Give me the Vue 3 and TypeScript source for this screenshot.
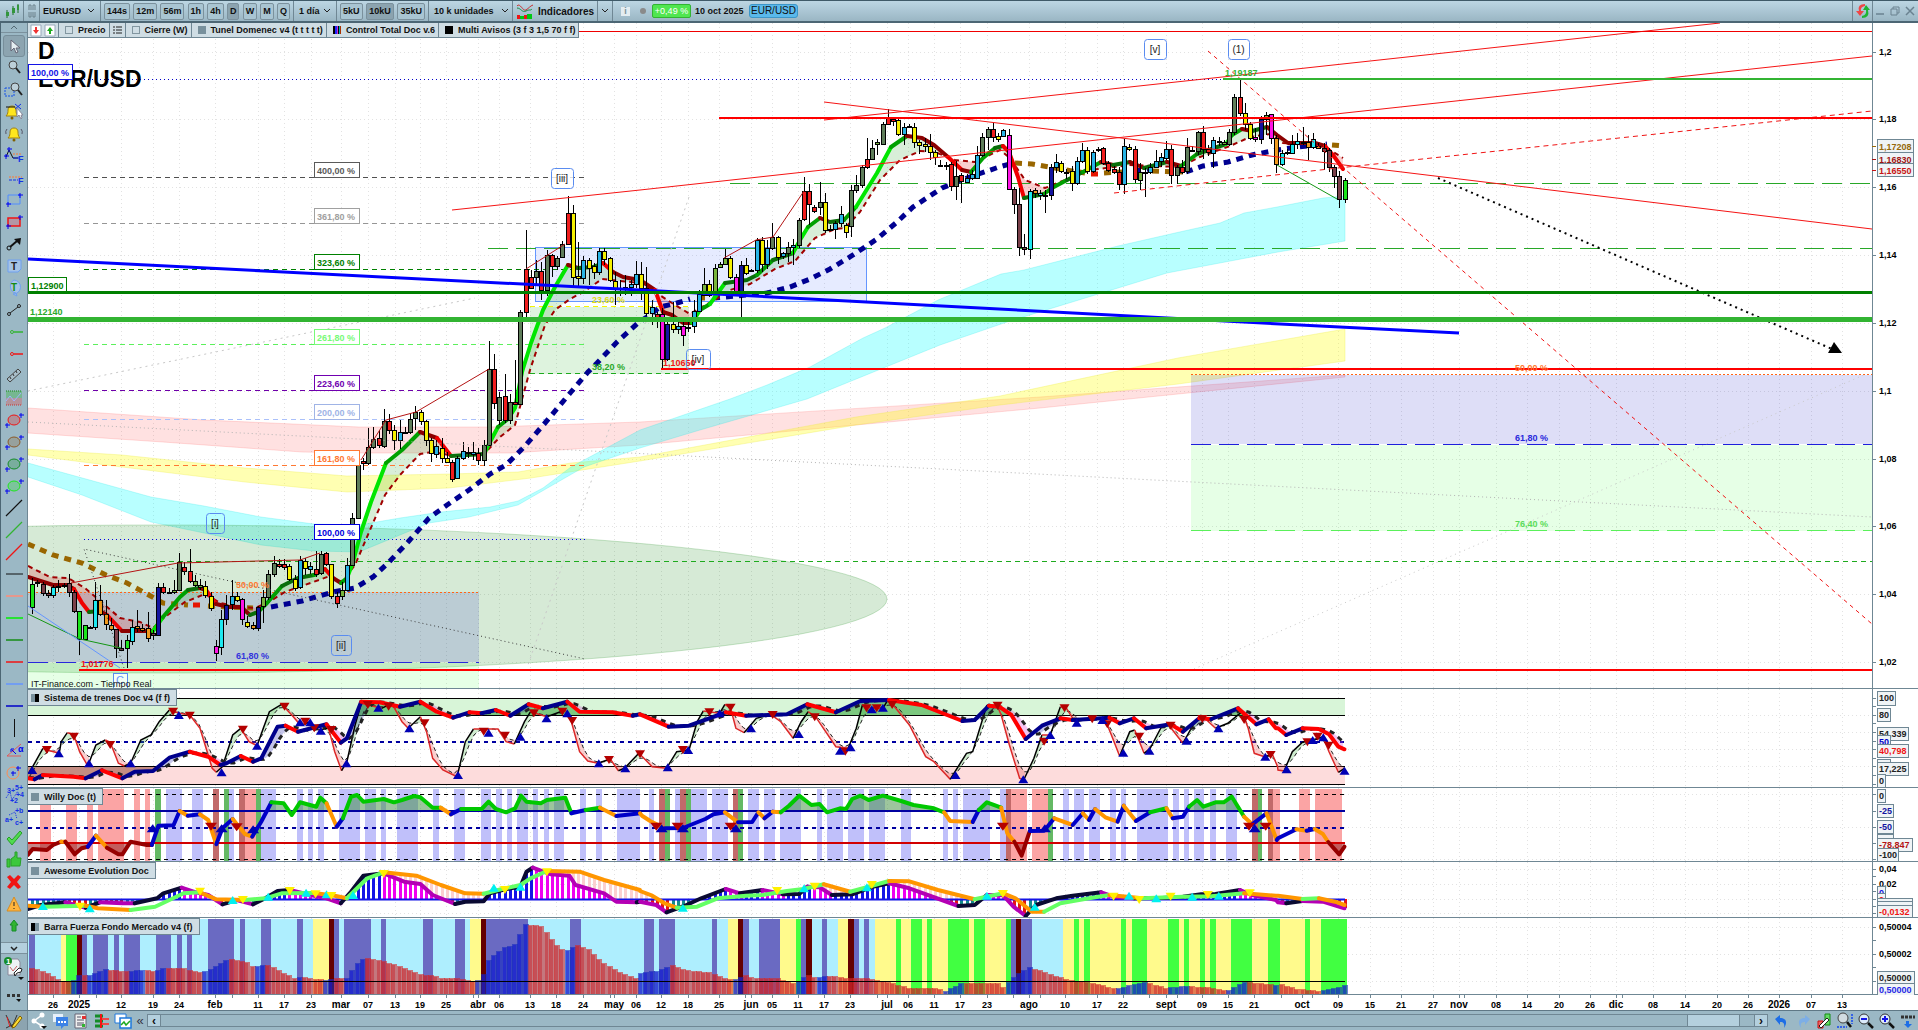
<script setup lang="ts">
type Pt = [number, number]
interface Run { d: string; c: string }
interface Tag { x: number; y: number; w: number; h: number; t: string; c: string; s?: string; b?: string }

const RIGHT = 1872
const FIRST_BAR = 32.2
const STEP = 5.25

const r1 = (n: number) => Math.round(n * 10) / 10
const xy = (s: string): Pt[] => s.trim().split(/\s+/).map(p => p.split(',').map(Number) as Pt)

// Indicator samples are stored on a finer pitch, in three blocks of 640 px.
const PITCH_X = 2.45
const PITCH_Y = 3
const BLOCKS = [0, 640, 1278]
const fine = (...blocks: string[]): Pt[] =>
  blocks.flatMap((b, i) => (b ? xy(b).map(([x, y]) => [r1(BLOCKS[i] + x / PITCH_X), r1(685 + y / PITCH_Y)] as Pt) : []))
const spans = (...blocks: string[]): Pt[] =>
  blocks.flatMap((b, i) => (b ? b.trim().split(/\s+/).map(p => {
    const [a, z] = p.split('-').map(Number)
    return [Math.round(BLOCKS[i] + a / PITCH_X), Math.round(BLOCKS[i] + z / PITCH_X)] as Pt
  }) : []))

const line = (p: Pt[]) => 'M' + p.map(q => q.join(',')).join('L')
function at(p: Pt[], x: number): number {
  for (let i = 1; i < p.length; i++) {
    if (x <= p[i][0]) {
      const [a, b] = [p[i - 1], p[i]]
      return b[0] === a[0] ? b[1] : a[1] + ((b[1] - a[1]) * (x - a[0])) / (b[0] - a[0])
    }
  }
  return p[p.length - 1][1]
}
function runs(p: Pt[], pick: (a: Pt, b: Pt) => string): Run[] {
  const out: Run[] = []
  for (let i = 1; i < p.length; i++) {
    const c = pick(p[i - 1], p[i])
    const last = out[out.length - 1]
    if (last && last.c === c) last.d += 'L' + p[i].join(',')
    else out.push({ c, d: line([p[i - 1], p[i]]) })
  }
  return out
}
function ribbon(a: Pt[], b: Pt[], over: string, under: string): Run[] {
  const out: Run[] = []
  let top: Pt[] = []
  let bot: Pt[] = []
  let sign = 0
  const flush = () => {
    if (top.length > 1) out.push({ c: sign < 0 ? over : under, d: line([...top, ...bot.reverse()]) + 'Z' })
    top = []
    bot = []
  }
  for (let x = 29; x <= 1344; x += 3) {
    const ya = r1(at(a, x))
    const yb = r1(at(b, x))
    const s = ya < yb ? -1 : 1
    if (s !== sign) { flush(); sign = s }
    top.push([x, ya])
    bot.push([x, yb])
  }
  flush()
  return out
}
const slope = (up: string, down: string) => (a: Pt, b: Pt) => (b[1] < a[1] ? up : down)
const lag = (p: Pt[], by: number): Pt[] => {
  const out: Pt[] = []
  for (let x = 29; x <= 1344; x += 5) out.push([x, r1((at(p, x - by) + at(p, x - by - 6) + at(p, x - by + 6)) / 3)])
  return out
}
const area = (p: Pt[], y: number) => line([[p[0][0], y], ...p, [p[p.length - 1][0], y]]) + 'Z'

/* ---------- candles ---------- */
const tones: Record<string, string> = {
  G: '#1be41b', B: '#7a404a', c: '#1ee8f0', o: '#f09a1e', n: '#1414a0', r: '#f01e1e', k: '#000', l: '#78b43c',
  g: '#5f7d5a', y: '#f5f000', m: '#ff14e6', b: '#28b4e6',
}
const tape = `G584,607,578,614 B582,583,580,587 B584,593,582,596 B593,595,590,598 c587,595,585,598 k586,587,580,592 k585,586,583,588
B583,592,574,597 B592,611,590,613 G611,639,611,655 G625,639,625,640 k627,628,626,629 c600,627,582,630 o600,614,585,616 o614,624,600,630
o625,629,618,631 B629,648,629,658 B648,650,640,651 G640,648,635,668 c627,641,620,645 o626,628,610,632 o628,630,624,632 o628,638,612,642
B633,635,630,640 n587,635,583,636 r587,592,583,594 k592,593,588,594 l590,592,580,594 g562,590,553,591 r567,571,562,575 r571,581,549,583
l581,585,575,587 l585,587,579,590 y586,595,581,598 y596,608,592,611 m646,653,640,661 c619,647,610,655 n605,619,595,625 b596,604,580,610
y596,600,592,602 m599,619,598,625 y622,626,616,628 o625,628,622,630 n607,628,606,631 l597,606,590,623 g574,597,570,600 g563,574,556,577
r564,566,559,568 r564,567,559,570 y566,579,564,581 y579,588,575,591 b560,587,556,589 y561,568,558,575 b566,569,562,574 r569,574,551,577
g554,573,551,575 r553,564,552,566 y564,596,564,599 r596,603,592,608 l590,596,582,600 b565,590,558,591 g518,565,513,566 g465,518,460,519
r461,463,458,470 g447,463,428,465 g439,447,427,449 r438,445,430,448 g421,446,409,448 r421,430,414,434 y430,440,425,450 b432,440,420,449
k432,433,427,434 g419,432,414,434 g412,418,406,430 y412,421,410,425 y421,440,420,446 y440,453,438,462 b446,454,440,458 y448,458,438,463
y458,462,452,463 r462,479,460,482 b458,478,456,479 b451,458,442,460 b452,453,447,458 b452,454,442,460 r453,460,448,465 g445,460,440,466
g369,445,341,446 r369,403,354,409 g397,420,392,425 r396,420,374,423 g402,420,394,424 r402,404,360,405 g312,404,310,404 r269,312,230,317
r277,288,270,289 g271,277,260,285 r271,290,262,300 g255,290,250,296 r255,266,254,277 g258,266,256,270 g244,257,241,258 r213,244,196,245
y213,277,205,286 y276,278,242,287 b260,278,256,284 y260,268,258,285 y266,272,263,279 b251,272,248,275 y251,259,248,265 y258,280,257,282
y281,289,272,305 k288,289,280,296 b287,289,275,295 b284,287,280,296 b274,284,261,288 y274,288,262,300 y288,313,267,316 b307,313,300,325
r314,317,312,328 m314,359,308,368 n324,359,322,361 y324,329,302,333 b326,329,322,334 m326,335,318,346 n327,328,322,332 b311,326,300,333
b294,311,290,312 l284,295,268,296 y284,295,280,297 l268,291,264,292 l264,267,262,268 l258,264,249,265 y258,277,256,279 m277,293,274,293
n265,294,261,317 y265,273,258,275 k270,271,269,272 b240,270,238,273 y240,264,237,272 b248,264,240,269 g237,248,223,250 y237,257,236,264
b253,256,252,259 g247,253,242,262 b245,247,239,265 g220,245,218,248 r191,219,177,221 r191,204,184,225 r207,211,205,213 g202,207,182,215
y202,230,193,233 k229,230,225,231 b223,229,221,239 b214,223,206,227 y225,232,223,238 g190,226,185,237 g185,190,175,193 g167,185,165,188
r159,167,138,169 g148,159,140,160 l142,144,139,155 g124,144,122,145 r117,124,109,125 r119,121,117,126 y120,134,117,136 b127,134,123,145
k126,127,124,128 y127,142,123,148 y142,145,140,154 y144,146,138,152 y146,152,134,160 y152,157,150,165 k165,166,160,166 k165,166,162,170
r164,186,162,191 g176,186,161,200 r175,181,173,203 b178,182,174,183 b174,178,170,180 b155,178,146,179 g137,155,133,157 g129,137,127,150
r129,137,123,142 y136,139,133,142 b130,136,129,137 m135,189,129,190 B189,204,187,214 B204,247,188,256 B247,249,234,255 c191,249,189,259
o190,193,188,198 c193,195,190,200 k195,196,190,213 n167,195,164,200 b162,167,154,173 y163,171,161,173 k172,173,169,179 y171,183,166,191
b161,183,157,185 b150,161,143,163 y150,171,147,174 b152,171,150,173 k149,150,147,152 r148,163,147,165 r163,170,161,172 r169,172,166,174
r172,184,167,190 b146,184,139,194 y147,149,144,151 r149,179,146,183 l172,180,163,190 k172,173,168,197 b167,172,163,174 b161,167,150,167
b157,161,153,167 b149,158,141,160 r149,175,145,184 g167,175,165,184 r167,172,160,174 g147,171,138,174 k150,151,146,151 g132,151,131,155
r132,149,126,159 r149,152,145,156 b140,153,137,168 k141,142,137,146 l142,144,140,145 g132,144,129,146 g97,132,94,135 r97,113,79,116
y113,124,103,130 y124,138,122,140 m137,139,128,142 n119,139,116,144 l115,119,112,135 m114,138,114,144 o138,164,135,173 c153,164,150,166
k152,153,149,155 c144,153,135,154 c141,144,133,149 k142,143,127,145 o142,147,135,160 c139,147,133,149 o146,148,143,149 B148,151,143,170
B150,167,148,172 B167,176,165,188 B176,199,171,208 G180,199,178,203`
const candles = tape.split(/\s+/).map((s, i) => {
  const [top, bot, high, low] = s.slice(1).split(',').map(Number)
  return { x: Math.round(FIRST_BAR + STEP * i), top, h: Math.max(1, bot - top), high, low, c: tones[s[0]] }
})

/* ---------- price pane averages ---------- */
const fast = xy(`28,577 53,585 67,585 74,589 82,603 89,612 100,611 107,615 122,631 153,631 163,617 180,597 188,590 200,588 206,590 216,604
229,607 241,607 250,615 258,612 267,603 282,586 298,578 314,575 325,569 333,578 341,583 347,578 353,562 361,532 371,502 386,463 402,450
420,432 437,438 451,456 467,455 484,454 490,442 498,427 508,419 515,408 522,372 531,343 543,310 555,287 568,265 578,268 593,267 603,263
613,272 623,277 640,280 655,290 663,312 672,315 683,323 692,323 700,310 710,304 725,283 747,280 757,275 773,260 793,253 800,240 808,227
820,218 830,222 844,220 856,207 877,173 891,147 907,136 922,138 934,145 948,157 962,170 971,172 983,158 995,148 1003,146 1009,152
1018,177 1024,198 1044,194 1052,188 1067,180 1083,172 1101,162 1113,165 1130,162 1144,168 1167,162 1181,166 1197,154 1226,144 1232,135
1242,129 1252,131 1267,127 1277,135 1288,143 1315,143 1325,146 1333,155 1343,169`)
const slow = xy(`28,566 50,577 68,578 85,588 100,601 120,618 140,622 153,628 165,617 185,602 205,594 220,603 240,607 255,608 267,603 285,592
330,576 342,582 355,565 370,530 385,495 400,475 420,454 432,452 455,456 484,454 500,437 515,425 530,370 545,325 555,310 570,299 585,291
602,279 640,283 655,292 675,305 690,314 700,308 715,300 730,290 750,284 775,269 795,261 815,238 835,229 845,228 860,212 880,180 900,160
920,151 935,152 955,160 975,162 1000,150 1010,158 1025,180 1045,188 1060,182 1090,170 1130,165 1180,167 1200,157 1230,146 1250,137
1270,134 1283,143 1315,144 1330,150 1343,158`)
const fastRuns = runs(fast, (a, b) => {
  const m = (b[1] - a[1]) / (b[0] - a[0])
  if (m < -1.2) return '#00e600'
  if (m < -0.5) return '#00a000'
  if (m < 0) return '#0a6e0a'
  return m < 0.9 ? '#8c0000' : '#f00000'
})
const fastFill = ribbon(fast, slow, 'rgba(60,170,60,.2)', 'rgba(230,60,60,.25)')
const longRuns = [
  { c: '#996600', p: '28,544 53,555 82,563 106,575 127,583 147,594 163,603 188,605' },
  { c: '#e61400', p: '193,605 204,605' },
  { c: '#996600', p: '208,606 253,608' },
  { c: '#000091', p: '271,607 302,601 333,592 355,588 373,577 388,563 408,542 429,518 447,505 469,490 490,474 506,465 524,447 545,423 571,392 588,372 597,363 617,342 638,323 650,315 660,307 677,303 690,299' },
  { c: '#996600', p: '698,298 708,298' },
  { c: '#000091', p: '713,298 737,296 767,293 790,287 810,279 830,269 853,255 877,239 897,222 913,207 942,188 967,178 999,167 1013,163' },
  { c: '#996600', p: '1015,163 1032,164 1060,169 1085,173' },
  { c: '#e61400', p: '1091,174 1100,174' },
  { c: '#996600', p: '1104,173 1122,172' },
  { c: '#000091', p: '1134,171 1150,169' },
  { c: '#996600', p: '1152,171 1183,172' },
  { c: '#000091', p: '1186,172 1203,166 1228,162 1252,155 1277,150 1298,147 1327,144' },
  { c: '#996600', p: '1332,145 1344,146' },
].map(s => ({ c: s.c, d: line(xy(s.p)) }))

const bands = [
  { c: 'rgba(255,90,90,.18)', s: 'rgba(255,90,90,.2)', p: '28,408 204,420 359,427 490,427 640,422 1040,397 1178,387 1345,375 1345,377 1178,394 1040,408 640,445 510,453 359,453 302,452 163,442 28,433' },
  { c: 'rgba(255,255,0,.3)', s: 'rgba(235,235,60,.3)', p: '28,449 122,455 245,468 347,476 449,474 518,472 571,463 640,457 856,417 1000,396 1178,358 1345,329 1345,361 1178,384 1000,405 856,425 640,461 531,478 449,488 347,492 245,482 122,467 28,455' },
  { c: 'rgba(0,255,255,.28)', s: 'rgba(0,225,225,.2)', p: '28,463 86,479 151,497 204,506 261,517 314,524 359,525 400,518 441,512 490,507 518,501 543,488 571,467 640,430 730,399 767,385 810,367 863,338 885,328 938,300 1001,274 1024,270 1118,246 1175,233 1220,223 1244,213 1277,207 1323,198 1345,196 1345,241 1278,252 1167,273 1007,322 940,345 807,399 700,430 640,448 584,467 518,505 469,517 429,523 400,535 359,552 314,551 261,545 204,533 151,522 82,495 28,477' },
].map(b => ({ ...b, d: line(xy(b.p)) + 'Z' }))

/* ---------- drawn levels ---------- */
interface Level { y: number; a: number; z: number; c: string; w: number; dash?: string }
const under: Level[] = [
  { y: 177, a: 84, z: 584, c: '#505050', w: 1, dash: '5 4' },
  { y: 223, a: 84, z: 584, c: '#969696', w: 1, dash: '5 4' },
  { y: 269, a: 84, z: 584, c: '#008000', w: 1, dash: '5 4' },
  { y: 344, a: 84, z: 584, c: '#5cf05c', w: 1, dash: '5 4' },
  { y: 390, a: 84, z: 584, c: '#6e00aa', w: 1, dash: '5 4' },
  { y: 419, a: 84, z: 584, c: '#aac0fa', w: 1, dash: '5 4' },
  { y: 465, a: 84, z: 584, c: '#ff7832', w: 1, dash: '5 4' },
  { y: 539, a: 84, z: 586, c: '#0000e6', w: 1, dash: '1 3' },
  { y: 561, a: 79, z: RIGHT, c: '#1eaa1e', w: 1, dash: '5 4' },
  { y: 592, a: 28, z: 479, c: '#ff6414', w: 1, dash: '2 2' },
  { y: 662, a: 28, z: 479, c: '#2828dc', w: 1, dash: '20 8' },
  { y: 306, a: 530, z: 689, c: '#f5f500', w: 1, dash: '5 4' },
  { y: 373, a: 530, z: 689, c: '#1eaa1e', w: 1, dash: '5 4' },
  { y: 374, a: 1191, z: RIGHT, c: '#ff6414', w: 1, dash: '2 2' },
  { y: 444, a: 1191, z: RIGHT, c: '#1e1edc', w: 1, dash: '20 8' },
  { y: 530, a: 1191, z: RIGHT, c: '#5af05a', w: 1, dash: '20 8' },
  { y: 79, a: 28, z: 1224, c: '#0000c8', w: 1, dash: '1 3' },
  { y: 183, a: 730, z: RIGHT, c: '#28a828', w: 1, dash: '20 8' },
  { y: 248, a: 488, z: RIGHT, c: '#28a828', w: 1, dash: '20 8' },
]
const over: Level[] = [
  { y: 31, a: 28, z: RIGHT, c: '#f00000', w: 1 },
  { y: 79, a: 1223, z: RIGHT, c: '#32b432', w: 2 },
  { y: 118, a: 719, z: RIGHT, c: '#ff0000', w: 2 },
  { y: 292, a: 28, z: RIGHT, c: '#008000', w: 3 },
  { y: 319, a: 28, z: RIGHT, c: '#32b432', w: 5 },
  { y: 369, a: 661, z: RIGHT, c: '#ff0000', w: 2 },
  { y: 670, a: 79, z: RIGHT, c: '#ff0000', w: 2 },
]
const strokes = [
  { p: '28,391 475,298', c: '#c8c8c8', w: 1, dash: '2 4' },
  { p: '689,197 528,665', c: '#c8c8c8', w: 1, dash: '2 4' },
  { p: '28,422 1872,517', c: '#b4b4b4', w: 1, dash: '1 3' },
  { p: '1194,669 1866,374', c: '#c8c8c8', w: 1, dash: '1 4' },
  { p: '124,668 84,549 585,659', c: '#3c3c3c', w: 1, dash: '1 3' },
  { p: '28,259 640,290 1280,324 1459,333', c: '#0000ff', w: 3, dash: '' },
  { p: '452,210 640,190 1280,120 1872,56', c: '#f51414', w: 1, dash: '' },
  { p: '824,120 1278,71 1720,23', c: '#f51414', w: 1, dash: '' },
  { p: '824,102 1278,157 1872,229', c: '#f51414', w: 1, dash: '' },
  { p: '1208,51 1872,624', c: '#f01414', w: 1, dash: '4 4' },
  { p: '1114,193 1338,168 1872,111', c: '#f01414', w: 1, dash: '5 4' },
  { p: '71,583 178,563 300,560 320,553', c: '#b41414', w: 1, dash: '' },
  { p: '361,460 386,420 416,412 489,369', c: '#b41414', w: 1, dash: '' },
  { p: '526,269 565,244', c: '#b41414', w: 1, dash: '' },
  { p: '724,258 756,240 773,237 804,191', c: '#b41414', w: 1, dash: '' },
  { p: '28,614 80,639 121,648', c: '#149614', w: 1, dash: '' },
  { p: '1277,165 1337,199', c: '#149614', w: 1, dash: '' },
  { p: '28,606 120,668', c: '#6496ff', w: 1, dash: '' },
  { p: '1438,178 1832,349', c: '#000', w: 2, dash: '2 4' },
].map(s => ({ ...s, d: line(xy(s.p)) }))

const fibs: Tag[] = [
  [162, '400,00 %', '#5a5a5a'], [208, '361,80 %', '#a0a0a0'], [254, '323,60 %', '#008000'], [329, '261,80 %', '#78fa78'],
  [375, '223,60 %', '#7000b0'], [404, '200,00 %', '#a0b4e6'], [450, '161,80 %', '#ff7832'], [524, '100,00 %', '#0000dc'],
].map(([y, t, c]) => ({ x: 314, y: y as number, w: 45, h: 15, t: t as string, c: c as string }))
const levelTags: Tag[] = [
  ...fibs,
  { x: 28, y: 64, w: 44, h: 15, t: '100,00 %', c: '#1414e6' },
  { x: 28, y: 277, w: 38, h: 14, t: '1,12900', c: '#008000' },
]
const notes = [
  { x: 30, y: 315, t: '1,12140', c: '#28a828' },
  { x: 236, y: 588, t: '50,00 %', c: '#ff7832' },
  { x: 236, y: 659, t: '61,80 %', c: '#3232dc' },
  { x: 81, y: 667, t: '1,01776', c: '#f01414' },
  { x: 1225, y: 76, t: '1,19187', c: '#32b432' },
  { x: 663, y: 366, t: '1,10650', c: '#f01414' },
  { x: 592, y: 303, t: '23,60 %', c: '#dcdc14' },
  { x: 592, y: 370, t: '38,20 %', c: '#28a828' },
  { x: 1515, y: 371, t: '50,00 %', c: '#ff7832' },
  { x: 1515, y: 441, t: '61,80 %', c: '#2828dc' },
  { x: 1515, y: 527, t: '76,40 %', c: '#5adc5a' },
]
const waves = [
  { x: 206, y: 513, w: 18, t: '[i]', o: 0 }, { x: 331, y: 635, w: 20, t: '[ii]', o: 0 }, { x: 551, y: 168, w: 22, t: '[iii]', o: 0.8 },
  { x: 686, y: 349, w: 24, t: '[iv]', o: 0 }, { x: 1144, y: 39, w: 22, t: '[v]', o: 0.8 }, { x: 1228, y: 39, w: 21, t: '(1)', o: 0.8 },
]

/* ---------- axes ---------- */
const priceTicks = [
  { y: 52, t: '1,2' }, { y: 119, t: '1,18' }, { y: 187, t: '1,16' }, { y: 255, t: '1,14' }, { y: 323, t: '1,12' },
  { y: 391, t: '1,1' }, { y: 459, t: '1,08' }, { y: 526, t: '1,06' }, { y: 594, t: '1,04' }, { y: 662, t: '1,02' },
]
const priceTags: Tag[] = [
  { x: 1877, y: 139, w: 37, h: 14, t: '1,17208', c: '#96690a' },
  { x: 1877, y: 152, w: 37, h: 12, t: '1,16830', c: '#a01414' },
  { x: 1877, y: 163, w: 37, h: 13, t: '1,16550', c: '#c81414' },
]
const dates: [number, string][] = [
  [53, '26'], [79, '2025'], [121, '12'], [153, '19'], [179, '24'], [215, 'feb'], [258, '11'], [284, '17'], [311, '23'], [341, 'mar'],
  [368, '07'], [395, '13'], [420, '19'], [446, '25'], [478, 'abr'], [499, '06'], [530, '13'], [556, '18'], [583, '24'], [614, 'may'],
  [636, '06'], [661, '12'], [688, '18'], [719, '25'], [751, 'jun'], [772, '05'], [798, '11'], [824, '17'], [850, '23'], [887, 'jul'],
  [908, '06'], [934, '11'], [960, '17'], [987, '23'], [1029, 'ago'], [1065, '10'], [1097, '17'], [1123, '22'], [1166, 'sept'],
  [1202, '09'], [1228, '15'], [1254, '21'], [1302, 'oct'], [1338, '09'], [1370, '15'], [1401, '21'], [1433, '27'], [1459, 'nov'],
  [1496, '08'], [1527, '14'], [1559, '20'], [1590, '26'], [1616, 'dic'], [1653, '08'], [1685, '14'], [1717, '20'], [1748, '26'],
  [1779, '2026'], [1811, '07'], [1842, '13'],
]
const minor = [96, 232, 473, 610, 745, 877, 1013, 1040, 1149, 1177, 1281, 1312, 1464, 1622]

/* ---------- Sistema de trenes ---------- */
const train = fine(
  `68,280 85,283 105,270 180,275 210,280 250,256 300,280 330,260 375,258 415,218 465,200 510,215 540,240 555,235 590,213 620,230 640,220
680,125 700,122 730,140 800,118 835,173 850,160 885,50 930,52 980,65 1030,50 1070,80 1110,98 1150,82 1180,85 1215,75 1250,92 1295,58
1330,70 1390,50 1420,80 1500,82 1550,92`,
  `0,88 70,125 120,122 210,82 260,92 360,88 410,58 480,82 540,48 610,45 690,60 790,108 820,105 855,62 880,65 910,90 945,162 985,122
1030,100 1060,105 1150,98 1175,115 1210,100 1240,130 1300,118 1330,140 1370,100 1400,102 1465,70 1510,118 1540,103 1558,130`,
  '0,130 20,150 60,130 100,132 125,148 148,185 163,193')
const trainLag = lag(train, 8)
const trainRuns = runs(train, slope('#00008c', '#ff0000'))
const trainFill = ribbon(train, trainLag, 'rgba(60,60,180,.3)', 'rgba(220,60,220,.3)')
const osc = fine(
  `70,265 80,245 105,190 115,195 145,205 150,170 165,143 180,148 195,200 215,243 235,180 258,165 270,172 290,235 305,243 320,235 345,165
370,150 390,110 415,75 440,85 465,90 490,130 505,190 520,250 530,262 545,245 570,150 590,130 610,170 630,182 645,130 660,80 690,58 715,90
730,112 745,118 760,110 780,135 805,130 820,200 837,257 850,230 870,120 885,55 935,70 960,55 985,110 1000,130 1030,95 1045,140 1060,220
1085,255 1120,275 1140,170 1160,132 1220,132 1240,170 1260,177 1285,110 1300,80 1340,95 1385,75 1400,110 1420,200 1440,228 1465,235
1495,222 1515,257 1530,250 1565,205`,
  `0,208 30,245 65,250 90,200 120,195 140,110 155,78 195,85 208,58 222,70 235,130 255,143 285,100 320,88 345,110 375,160 395,110 412,80
430,95 480,185 510,190 530,130 545,60 570,70 595,70 607,45 620,60 660,120 700,215 720,230 760,283 800,205 815,200 850,60 875,62 885,90
905,180 930,280 940,285 965,220 985,150 1005,150 1030,65 1045,70 1065,110 1110,100 1140,105 1155,150 1175,213 1200,140 1212,135 1235,205
1250,190 1280,120 1295,120 1330,175 1355,120 1375,90 1410,130 1440,115 1475,80 1490,130 1505,205 1530,215 1550,210 1562,245`,
  '0,255 15,258 35,200 60,172 85,165 110,155 125,200 148,262 163,250')
const oscRuns = runs(osc, slope('#000', '#dc2828'))
const oscLag = lag(osc, 3)
const oscFill = ribbon(osc, oscLag, 'rgba(60,180,60,.25)', 'rgba(230,60,60,.25)')
const oscDown = fine(
  '115,195 181,155 270,180 424,80 465,92 595,134 697,65 748,110 770,130 812,135 901,60 952,65 1040,115 1185,140 1237,152 1308,85 1378,80 1402,108 1492,225',
  '0,208 105,195 170,82 222,68 325,90 428,97 503,200 555,70 580,70 618,60 876,62 990,170 1040,70 1108,103 1145,118 1223,155 1300,122 1378,102 1480,105 1545,210',
  '72,172 97,155 124,182')
const oscUp = fine(
  '79,255 144,205 218,235 320,235 438,90 543,262 630,182 735,112 760,112 786,137 849,235 927,68 1003,130 1122,270 1197,143 1275,155 1339,100 1390,85 1467,235 1532,250',
  '68,247 118,195 195,85 272,130 389,147 490,197 516,187 568,73 595,68 773,270 939,283 1005,150 1070,113 1133,105 1184,203 1248,197 1339,167 1417,130 1532,215',
  '21,253 85,165 111,157 163,257')
const down = (p: Pt, s = 5) => `M${p[0] - s},${p[1] - 4}h${s * 2}l${-s},8z`
const up = (p: Pt, s = 5) => `M${p[0] - s},${p[1] + 4}h${s * 2}l${-s},-8z`
const trainTags: Tag[] = [
  { x: 1877, y: 691, w: 18, h: 14, t: '100', c: '#222' },
  { x: 1877, y: 708, w: 13, h: 13, t: '80', c: '#222' },
  { x: 1877, y: 727, w: 31, h: 13, t: '54,339', c: '#222' },
  { x: 1877, y: 735, w: 13, h: 12, t: '50', c: '#0000c8' },
  { x: 1877, y: 744, w: 31, h: 13, t: '40,798', c: '#f01414' },
  { x: 1877, y: 759, w: 13, h: 5, t: '', c: '#222' },
  { x: 1877, y: 762, w: 31, h: 13, t: '17,225', c: '#222' },
  { x: 1877, y: 774, w: 8, h: 13, t: '0', c: '#222' },
]

/* ---------- Willy ---------- */
const willy = fine(
  `68,510 80,492 115,495 130,480 150,470 160,470 183,508 200,490 215,485 235,452 262,488 290,508 300,508 320,470 360,480 372,480 388,422
425,421 440,378 460,392 490,388 510,405 530,478 545,430 570,402 600,447 618,455 640,410 665,352 695,355 715,390 735,352 775,365 785,338
800,355 825,425 840,400 860,335 875,330 890,350 940,342 965,352 985,345 1015,333 1030,337 1060,368 1080,368 1105,388 1130,372 1180,372
1197,350 1215,372 1240,382 1262,370 1277,332 1290,350 1325,355 1340,345 1385,338 1400,385 1435,375 1470,368 1510,393 1568,385`,
  `5,392 25,408 60,430 105,429 160,402 180,388 208,382 240,412 275,411 290,382 305,400 325,380 345,382 365,362 390,332 420,360 440,357
458,382 490,370 505,372 520,342 540,332 560,345 595,332 640,348 670,360 720,370 745,382 760,408 815,411 830,375 850,352 885,368 900,445
917,470 935,512 955,438 990,437 1015,400 1060,420 1085,385 1100,405 1115,372 1140,397 1170,410 1185,362 1215,408 1250,382 1290,370
1305,400 1330,395 1345,365 1365,345 1380,365 1410,352 1430,352 1450,335 1480,395 1500,418 1535,385 1560,465`,
  '0,460 45,433 70,437 90,432 110,447 123,471 150,508 163,485')
const willyRuns = runs(willy, (a, b) => {
  const mid = (a[1] + b[1]) / 2
  if (mid < 811) return '#00c800'
  if (mid > 842) return '#960000'
  return b[1] < a[1] ? '#0000c8' : '#ff9600'
})
const willyBars = [
  { c: '#fba4a4', s: spans('98-125 162-188 213-228 240-304 329-342 355-368 600-626', '909-948 960-1000 1552-1568', '51-78 91-157') },
  { c: '#64b964', s: spans('380-394 549-561 626-640', '61-73 113-125 240-252 1000-1012 1513-1525') },
  { c: '#c26a6a', s: spans('522-537 586-600', '47-61 98-113 228-240 897-909 1499-1513 1539-1552') },
  { c: '#c0c0fa', s: spans(
    '407-446 471-497 561-574 640-676 728-742 755-767 780-794 831-882 895-920 933-946 973-1024 1062-1075 1113-1139 1178-1203 1216-1229 1242-1254 1267-1293 1306-1317 1333-1345 1357-1383 1421-1436 1460-1475 1512-1568',
    '22-35 86-98 125-164 176-216 265-291 304-330 343-394 434-446 458-497 510-549 561-600 639-664 742-755 767-779 791-857 882-897 1037-1050 1063-1088 1100-1127 1152-1166 1178-1190 1218-1293 1306-1320 1333-1345 1357-1383 1397-1410 1436-1463') },
]
const willyDown = fine('517,425 580,427', '40,425 92,425 222,425 889,425 1492,425 1533,425')
const willyUp = fine('374,430 543,430 620,433', '53,430 105,430 235,430 992,430 1506,430')
const willyTags: Tag[] = [
  { x: 1877, y: 789, w: 8, h: 13, t: '0', c: '#222' },
  { x: 1877, y: 804, w: 16, h: 13, t: '-25', c: '#1414a0' },
  { x: 1877, y: 820, w: 16, h: 13, t: '-50', c: '#1414a0' },
  { x: 1877, y: 834, w: 16, h: 6, t: '', c: '#222' },
  { x: 1877, y: 838, w: 35, h: 13, t: '-78,847', c: '#b41414' },
  { x: 1877, y: 848, w: 21, h: 13, t: '-100', c: '#222' },
]

/* ---------- Awesome ---------- */
const ZERO = 899
const aoFast = fine(
  `68,672 100,660 160,652 210,668 245,652 300,655 330,655 385,640 400,625 445,608 480,622 510,630 545,658 580,645 620,658 650,640 680,618
710,615 760,630 800,640 835,655 860,620 890,572 940,565 990,590 1030,597 1060,630 1115,657 1140,650 1185,649 1200,625 1240,612 1275,605
1290,560 1305,548 1350,568 1395,572 1410,600 1480,625 1510,650 1560,652`,
  `0,650 40,660 65,682 110,662 150,640 210,612 245,625 300,615 350,628 390,627 410,605 440,607 470,630 520,628 570,605 610,595 660,610
780,663 820,660 850,630 890,631 915,665 945,693 970,660 1020,640 1060,632 1130,622 1160,635 1210,640 1280,639 1330,635 1375,628 1410,627
1470,615 1500,630 1558,645`, '0,652 20,655 60,648 110,650 163,670')
const aoSlow = fine(
  `68,662 110,665 210,662 240,670 320,675 380,665 450,625 490,622 530,643 600,645 650,640 690,625 770,624 820,632 850,640 900,580 940,562
1020,572 1080,600 1140,625 1185,626 1230,612 1275,600 1300,580 1340,558 1420,560 1480,585 1568,615`,
  `0,618 30,632 60,655 90,668 140,665 190,640 260,632 300,630 360,618 400,612 450,598 515,620 560,605 610,588 660,589 730,615 820,643
860,632 890,625 920,640 960,680 990,680 1030,655 1100,640 1150,630 1230,640 1330,635 1400,634 1480,625 1558,632`,
  '0,632 60,642 100,640 140,650 163,660')
const aoFastRuns = runs(aoFast, slope('#0a0a32', '#b400b4'))
const aoSlowRuns = runs(aoSlow, slope('#64ff64', '#ff9600'))
const aoBars = candles.map(k => {
  const f = at(aoFast, k.x)
  const rising = at(aoFast, k.x + 3) <= at(aoFast, k.x - 3)
  const s = Math.min(at(aoSlow, k.x), ZERO)
  const c = f < ZERO ? (rising ? '#1414e6' : '#f000f0') : rising ? '#148c8c' : '#e61414'
  return { x: k.x - 1, y: Math.round(Math.min(f, ZERO)), h: Math.max(1, Math.round(Math.abs(f - ZERO))), c, s: Math.round(s), sh: Math.max(0, Math.round(Math.min(f, ZERO) - s)) }
})
const aoUp = fine('105,663 220,670 570,645 657,635 750,623 800,628 865,630 1210,608 1275,605', '105,668 402,610 556,607 850,632 967,665 1198,632 1265,640 1353,635 1418,632')
const aoDown = fine('196,665 490,620 595,645 710,618 773,628 812,633 940,567 1237,615 1340,562', '336,618 428,605 568,600 889,627 1160,635 1223,645 1300,635 1391,630 1494,625')
const aoTags: Tag[] = [
  { x: 1877, y: 886, w: 8, h: 10, t: '0', c: '#1414e6' },
  { x: 1877, y: 893, w: 8, h: 10, t: '0', c: '#f01414' },
  { x: 1877, y: 898, w: 35, h: 6, t: '', c: '#f01414' },
  { x: 1877, y: 901, w: 35, h: 6, t: '', c: '#f01414' },
  { x: 1877, y: 905, w: 35, h: 12, t: '-0,0132', c: '#f01414' },
]

/* ---------- Barra Fuerza ---------- */
const force = fine(
  `79,850 110,858 150,888 180,888 195,868 225,870 255,852 310,858 360,855 380,860 395,850 450,850 490,860 510,857 560,820 600,828 625,845
660,838 690,860 720,878 740,875 800,885 820,878 850,880 870,840 895,818 940,828 980,842 1030,868 1060,870 1090,880 1130,880 1165,890
1185,870 1200,820 1230,790 1265,775 1285,715 1330,725 1370,790 1390,797 1412,778 1440,790 1480,835 1530,868 1565,880`,
  `0,865 50,855 78,840 110,855 170,862 210,880 240,882 258,868 280,880 340,880 380,895 410,870 430,877 460,872 520,880 560,880 600,890
630,898 660,908 720,908 750,918 790,892 830,895 885,895 890,908 920,870 955,845 1000,865 1060,887 1100,890 1170,912 1200,898 1240,892
1290,908 1340,902 1400,908 1440,918 1480,890 1558,900`, '0,895 50,912 100,918 130,912 165,900')
const forceBars = candles.map(k => {
  const y = Math.round(at(force, k.x))
  return { x: k.x - 3, y, h: 995 - y, up: at(force, k.x + 3) < at(force, k.x - 3) }
})
const forceBands = [
  { c: '#aeeefe', s: spans('68-1568', '0-216 252-343 394-407 421-485 524-576 960-1036') },
  { c: '#fffa8c', s: spans('149-162 767-806 1151-1178', '216-240 343-382 485-510 576-909 1036-1568', '0-105') },
  { c: '#41ff41', s: spans('162-189', '382-394 627-639 664-691 703-715 755-806 818-845 897-909 1063-1076 1088-1102 1178-1191 1205-1242 1293-1320 1333-1345 1372-1384 1397-1411 1448-1499 1539-1568', '66-78 105-169') },
  { c: '#6a6ac2', s: spans('71-86 201-213 228-265 279-292 304-343 382-419 434-446 458-470 510-573 588-600 639-664 728-742 818-831 843-909 933-946 1036-1062 1115-1139 1191-1293 1396-1423', '10-34 47-86 176-189 252-267 292-343 394-407 446-458 524-537 549-561 909-960') },
  { c: '#640000', s: spans('189-201 806-818 1178-1191', '240-252 407-421 510-524 921-933') },
]
const forceTags: Tag[] = [
  { x: 1877, y: 971, w: 37, h: 13, t: '0,50000', c: '#222' },
  { x: 1877, y: 983, w: 37, h: 12, t: '0,50000', c: '#2828e6' },
]

/* ---------- toolbars ---------- */
const frames = ['144s', '12m', '56m', '1h', '4h', 'D', 'W', 'M', 'Q']
const sizes = ['5kU', '10kU', '35kU']
const legends = [
  { t: 'Precio', k: 'empty' }, { t: 'Cierre (W)', k: 'empty' }, { t: 'Tunel Domenec v4 (t t t t t)', k: 'slate' },
  { t: 'Control Total Doc v.6', k: 'multi' }, { t: 'Multi Avisos (3 f 3 1,5 70 f f)', k: 'black' },
]
const plus = (x: number, y: number) => `<path d="M${x - 2} ${y}h5M${x} ${y - 2}v5" stroke="#0000f0" stroke-width="1"/>`
const oval = (c: string) => `<ellipse cx="11" cy="11" rx="6" ry="5" fill="${c}" fill-opacity=".25" stroke="${c}" stroke-width="1"/>${plus(4, 16)}${plus(18, 6)}`
const diag = (c: string) => `<path d="M3 19L19 3" stroke="${c}" stroke-width="1.200"/>`
const flat = (c: string) => `<path d="M3 11H20" stroke="${c}" stroke-width="1.500"/>`
const lens = '<circle cx="10" cy="8" r="4" fill="#bccfd8" stroke="#444"/><path d="M13 11l4 5" stroke="#222" stroke-width="2"/>'
const bell = '<path d="M5 15c2-2 2-4 2-6 0-3 2-4 4-4s4 1 4 4c0 2 0 4 2 6z" fill="#ffe61e" stroke="#a08214"/><circle cx="11" cy="17" r="1.500" fill="#806000"/>'
const letter = (t: string, x: number, y: number, c: string, s = 10) => `<text x="${x}" y="${y}" fill="${c}" font-size="${s}" font-weight="bold">${t}</text>`
const tools: [string, string][] = [
  ['Cursor', '<path d="M8 5v11l3-3 2 5 2-1-2-4h4z" fill="#e6eef2" stroke="#667"/>'],
  ['Lupa', lens],
  ['Zoom de área', '<path d="M2 9h9v8H2z" fill="none" stroke="#1450e6" stroke-dasharray="2 1"/>' + lens.replace('cx="10"', 'cx="12"').replace('M13 11', 'M15 11')],
  ['Alerta en objeto', '<g transform="translate(-2 0)">' + bell + '</g><path d="M3 6h9" stroke="#111"/><path d="M12 3l6 5M18 3l-6 5" stroke="#1432e6"/><path d="M14 7v9l2-2 2 4 1-1-1-3h2z" fill="#fff" stroke="#889"/>'],
  ['Alerta', bell + '<path d="M4 6q-2 2-1 5M18 6q2 2 1 5" stroke="#556" fill="none"/>'],
  ['Fibonacci', '<path d="M3 12L6 5l4 8h5" stroke="#111" fill="none"/><path d="M10 9h9" stroke="#ff7832" stroke-dasharray="2 1"/><path d="M10 13h6" stroke="#1432e6"/>' + plus(6, 4) + plus(3, 11) + letter('F', 15, 17, '#1432e6', 9)],
  ['Extensión', '<path d="M6 10h13" stroke="#ff7832" stroke-dasharray="2 1"/><path d="M6 13h9" stroke="#1432e6" stroke-dasharray="3 1"/>' + letter('F', 15, 17, '#1432e6', 9)],
  ['Rectángulo', '<path d="M5 6h12v9H5z" fill="none" stroke="#508cff"/>' + plus(5, 15) + plus(17, 6)],
  ['Rectángulo rojo', '<path d="M5 7h12v8H5z" fill="#b496a5" stroke="#f01414" stroke-width="1.500"/>' + plus(5, 15) + plus(17, 6)],
  ['Flecha', '<circle cx="6" cy="15" r="2" fill="none" stroke="#111"/><path d="M7 14L14 8" stroke="#111" stroke-width="2"/><path d="M18 5l-7 1 6 6z" fill="#111"/>'],
  ['Texto', '<path d="M5 5h13v9l-3 3H5z" fill="#a6c4e6" stroke="#6ea0f0"/>' + letter('T', 8, 15, '#222', 10)],
  ['Comentario', '<path d="M11 3a7 7 0 1 1-1 14l4 2-1-3a7 7 0 0 1-2-13z" fill="#a6c4e6" stroke="#6ea0f0"/>' + letter('T', 8, 14, '#148c14', 10)],
  ['Segmento', '<circle cx="6" cy="15" r="1.500" fill="none" stroke="#222"/><circle cx="16" cy="7" r="1.500" fill="none" stroke="#222"/><path d="M7 14L15 8" stroke="#222"/>'],
  ['Soporte', '<circle cx="9" cy="11" r="1.500" fill="none" stroke="#32b432"/><path d="M11 11h9" stroke="#32b432" stroke-width="1.500"/>'],
  ['Resistencia', '<circle cx="9" cy="11" r="1.500" fill="none" stroke="#f01414"/><path d="M11 11h9" stroke="#f01414" stroke-width="1.500"/>'],
  ['Regla', '<path d="M4 14L15 4l3 3L7 17z" fill="#a9bfca" stroke="#444"/><path d="M7 12l1 2M10 9l1 2M13 6l1 2" stroke="#333"/>'],
  ['Canal', '<path d="M3 4h16v7H3z" fill="#32b432" opacity=".35"/><path d="M3 11h16v7H3z" fill="#e05050" opacity=".35"/><path d="M3 14l4-5 4 5 7-8" stroke="#a0b4ff" fill="none"/><path d="M3 4h16" stroke="#148c14" stroke-dasharray="1 1"/><path d="M3 18h16" stroke="#c83232" stroke-dasharray="1 1"/>'],
  ['Elipse roja', oval('#f01414')], ['Elipse marrón', oval('#8c5a28')], ['Elipse verde', oval('#148c28')], ['Elipse clara', oval('#1ee61e')],
  ['Línea negra', diag('#111')], ['Línea verde', diag('#32b432')], ['Línea roja', diag('#f01414')],
  ['Horizontal negra', '<path d="M3 11H20" stroke="#111"/>'], ['Horizontal salmón', flat('#ff8c78')], ['Horizontal lima', flat('#00f000')],
  ['Horizontal verde', flat('#148c14')], ['Horizontal roja', flat('#f01414')], ['Horizontal azul', flat('#6496ff')], ['Horizontal marina', flat('#0000c8')],
  ['Vertical', '<path d="M11.500 2v18" stroke="#111"/>'],
  ['Ángulo', '<path d="M18 5L4 17h14" stroke="#e05a5a" fill="none"/><path d="M9 11l4 4M8 13v-3h3" stroke="#0000f0" fill="none"/>' + letter('α', 15, 13, '#0000f0', 9)],
  ['Círculo', '<circle cx="10" cy="12" r="6" fill="none" stroke="#ff8c50"/>' + plus(10, 12) + plus(15, 7)],
  ['Ondas 12345', letter('5+', 12, 7, '#1432e6', 7) + letter('3+', 4, 10, '#1432e6', 7) + letter('+4', 13, 14, '#1432e6', 7) + letter('+2', 7, 20, '#1432e6', 7) + '<path d="M3 15l4-6 2 8 6-9" stroke="#1432e6" fill="none" stroke-dasharray="1 1"/>'],
  ['Ondas abc', letter('+b', 12, 8, '#1432e6', 7) + letter('a+', 2, 17, '#1432e6', 7) + letter('c+', 12, 20, '#1432e6', 7) + '<path d="M6 10l6-3 2 7" stroke="#1432e6" fill="none" stroke-dasharray="1 1"/>'],
  ['Correcto', '<path d="M4 12l2-2 3 3 8-9 2 2L9 18z" fill="#50dc50" stroke="#28a028"/>'],
  ['Me gusta', '<path d="M4 10h3v8H4zM8 10l4-3V3h2v6h4l-1 8H8z" fill="#3cc83c" stroke="#28a028"/>'],
  ['Error', '<path d="M4 6l3-2 4 4 4-4 3 2-4 5 4 5-3 2-4-4-4 4-3-2 4-5z" fill="#f01414"/>'],
  ['Aviso', '<path d="M11 4l7 14H4z" fill="#ffb43c" stroke="#d28c28"/><path d="M11 9v4M11 15v1" stroke="#222"/>'],
  ['Arriba', '<path d="M11 5l4 5h-2v6H9v-6H7z" fill="#32b432" stroke="#148c28"/>'],
  ['Abajo', '<path d="M11 18l5-6h-3V5H9v7H6z" fill="#f01414"/>'],
]
const leftIcons: [string, string][] = [
  ['Compartir', '<circle cx="5" cy="10" r="2.500" fill="#fff"/><circle cx="13" cy="4" r="2.500" fill="#fff"/><circle cx="13" cy="15" r="2.500" fill="#fff"/><path d="M13 4L5 10l8 5" stroke="#fff" fill="none" stroke-width="1.500"/><path d="M12 15h6l-3 3z" fill="#111"/>'],
  ['Mensajes', '<path d="M3 3h10v8H3z" fill="#e6f0fa"/><path d="M6 6h12v9h-4l-3 3v-3H6z" fill="#3c82e6"/><path d="M8 11h8" stroke="#fff" stroke-dasharray="2 1" stroke-width="2"/>'],
  ['Lista', '<path d="M4 3h11v14H4z" fill="#f0f0f0" stroke="#667"/><path d="M6 6h4M6 9h7M6 12h7M6 14h5" stroke="#556"/><path d="M11 5h4v3h-4z" fill="#e03232"/><path d="M11 13h3v3h-3z" fill="#32b432"/>'],
  ['Órdenes', '<path d="M3 5h8M3 10h8M3 15h8" stroke="#148c28" stroke-width="3"/><path d="M9 3v14" stroke="#f01414" stroke-width="2"/><path d="M10 8h7M10 13h7" stroke="#f04646" stroke-width="2"/>'],
  ['Ventanas', '<path d="M2 3h11v9H2z" fill="#fff" stroke="#1e78dc"/><path d="M7 7h11v10H7z" fill="#fff" stroke="#1e78dc" stroke-width="1.500"/><path d="M8 14l3-3 2 3 4-4" stroke="#1eaa1e" fill="none" stroke-width="1.500"/>'],
]
const rightIcons: [string, string][] = [
  ['Deshacer', '<path d="M3 8l5-4v3c6 0 8 4 4 10 1-5-1-6-4-6v3z" fill="#1e6ee6"/>'],
  ['Rehacer', '<path d="M17 8l-5-4v3c-6 0-8 4-4 10-1-5 1-6 4-6v3z" fill="#7daee6"/>'],
  ['Ajustes', '<path d="M4 10h5v7H4z" fill="#f06464" stroke="#c81414"/><path d="M11 3h5v11h-5z" fill="#64dc64" stroke="#148c14"/><path d="M5 15l8-8 2 2-8 8z" fill="#fff" stroke="#222"/>'],
  ['Ajustar zoom', '<circle cx="8" cy="7" r="5" fill="#d2dce1" stroke="#444"/><path d="M12 11l4 5" stroke="#111" stroke-width="2.500"/><path d="M17 3v10M2 16h10" stroke="#1446f0" stroke-width="1.500" stroke-dasharray="2 1"/>'],
  ['Alejar', '<circle cx="8" cy="8" r="5" fill="#dceafa" stroke="#333"/><path d="M5 8h6" stroke="#1414e6" stroke-width="2"/><path d="M12 12l5 5" stroke="#111" stroke-width="2.500"/>'],
  ['Acercar', '<circle cx="8" cy="8" r="5" fill="#dceafa" stroke="#333"/><path d="M5 8h6M8 5v6" stroke="#1414e6" stroke-width="2"/><path d="M12 12l5 5" stroke="#111" stroke-width="2.500"/>'],
  ['Más', '<path d="M3 6h14" stroke="#333" stroke-width="3" stroke-dasharray="3 1"/><path d="M8 10h3v3h3l-4 4-4-4h2z" fill="#1e6ee6"/>'],
]
const panes = [
  { id: 'train', box: '28 689 1890 99', top: 689, h: 99, title: 'Sistema de trenes Doc v4 (f f)', key: 'half' },
  { id: 'willy', box: '28 788 1890 74', top: 788, h: 74, title: 'Willy Doc (t)', key: 'slate' },
  { id: 'ao', box: '28 862 1890 56', top: 862, h: 56, title: 'Awesome Evolution Doc', key: 'slate' },
  { id: 'force', box: '28 918 1890 77', top: 918, h: 77, title: 'Barra Fuerza Fondo Mercado v4 (f)', key: 'half dark' },
]
const tagsOf: Record<string, Tag[]> = { train: trainTags, willy: willyTags, ao: aoTags, force: forceTags }
const plain: Record<string, { y: number; t: string }[]> = {
  train: [], willy: [], ao: [{ y: 869, t: '0,04' }, { y: 884, t: '0,02' }], force: [{ y: 927, t: '0,50004' }, { y: 954, t: '0,50002' }],
}
const gridY: Record<string, number[]> = { train: [715, 732, 749, 766], willy: [794, 827, 859], ao: [869, 884, 899, 913], force: [927, 954, 981] }
const ticksY: Record<string, number[]> = {
  train: [698, 706, 715, 723, 732, 741, 749, 758, 766, 775, 784], willy: [794, 811, 827, 843, 859], ao: [869, 876, 884, 891, 899, 906, 913], force: [927, 940, 954, 967, 981, 994],
}
</script>

<template>
  <div class="app">
    <header class="topbar">
      <button class="cell sq" aria-label="Gráfico"><svg width="20" height="20"><path d="M5 9v8M11 5v9M16 3v9" stroke="#1e6e28"/><path d="M4 11h3v4H4zM10 7h3v5h-3zM15 4h2v5h-2z" fill="#32963c"/></svg></button>
      <button class="cell grip" aria-label="Enlace"><svg width="10" height="16"><path d="M2 7V2h2v5M6 7V2h2v5M2 9v5h2V9M6 9v5h2V9" stroke="#6c828d" fill="none"/></svg></button>
      <label class="cell pick symbol"><select aria-label="Símbolo"><option>EURUSD</option></select><svg width="8" height="6"><path d="M1 1l3 3 3-3" fill="none" stroke="#222"/></svg></label>
      <div class="cell group frames">
        <button v-for="f in frames" :key="f" :class="{ on: f === 'D' }">{{ f }}</button>
      </div>
      <label class="cell pick period"><select aria-label="Periodo"><option>1 día</option></select><svg width="8" height="6"><path d="M1 1l3 3 3-3" fill="none" stroke="#222"/></svg></label>
      <div class="cell group sizes">
        <button v-for="s in sizes" :key="s" :class="{ on: s === '10kU' }">{{ s }}</button>
      </div>
      <label class="cell pick units"><select aria-label="Unidades"><option>10 k unidades</option></select><svg width="8" height="6"><path d="M1 1l3 3 3-3" fill="none" stroke="#222"/></svg></label>
      <button class="cell ind"><svg width="18" height="18"><path d="M1 4c3-4 6 6 9 4s4-4 7-5" fill="none" stroke="#c83232"/><path d="M1 6c4 0 5 5 9 3s4 0 6-2" fill="none" stroke="#148c3c"/><path d="M1 13h3v4H1zM8 13h3v4H8z" fill="#f01414"/><path d="M4 14h4v3H4zM11 12h5v5h-5z" fill="#00c814"/></svg><span>Indicadores</span></button>
      <button class="cell drop" aria-label="Más indicadores"><svg width="8" height="6"><path d="M1 1l3 3 3-3" fill="none" stroke="#222"/></svg></button>
      <span class="info">i</span><span class="dot"></span>
      <span class="chg">+0,49 %</span><span class="day">10 oct 2025</span><a class="pair" href="#">EUR/USD</a>
      <span class="fill"></span>
      <button class="cell sync" aria-label="Sincronizar"><svg width="16" height="16"><path d="M10 1Q2 1 4 8H1l4 5 4-5H6q-1-4 4-5z" fill="#f04646"/><path d="M7 15q8 0 6-8h2l-4-5-3 5h3q1 5-4 6z" fill="#1eb432"/></svg></button>
      <button class="win" aria-label="Minimizar"><svg width="12" height="12"><path d="M2 9h8" stroke="#6a8290" stroke-width="1.500"/></svg></button>
      <button class="win" aria-label="Restaurar"><svg width="12" height="12"><path d="M2 4h6v6H2zM4 4V2h6v6H8" fill="none" stroke="#6a8290"/></svg></button>
      <button class="win" aria-label="Cerrar"><svg width="12" height="12"><path d="M2 2l8 8M10 2l-8 8" stroke="#6a8290" stroke-width="1.500"/></svg></button>
    </header>

    <div class="body">
      <nav class="side">
        <button class="fold" aria-label="Subir"><svg width="8" height="5"><path d="M1 4l3-3 3 3" fill="none" stroke="#556a75"/></svg></button>
        <div class="tools">
          <button v-for="(t, i) in tools" :key="t[0]" :aria-label="t[0]" :class="{ on: i === 0 }"><svg width="22" height="22" viewBox="0 0 22 22" v-html="t[1]"></svg></button>
        </div>
        <button class="fold more" aria-label="Bajar"><svg width="8" height="5"><path d="M1 1l3 3 3-3" fill="none" stroke="#222" stroke-width="1.500"/></svg></button>
        <button class="big" aria-label="Código"><svg width="26" height="26"><path d="M7 4h10l2 3v13H7z" fill="#eef3f5" stroke="#889"/><path d="M9 12l3 4 4-5" stroke="#c86464" fill="none"/><circle cx="7" cy="6" r="4" fill="#148c28"/><text x="5" y="9" fill="#fff" font-size="8" font-weight="bold">1</text><path d="M13 18l5-5 3 1-1 3-4 1-2 3z" fill="#fff" stroke="#222"/><path d="M17 22h6l-3 3z" fill="#111"/></svg></button>
        <button class="big" aria-label="Opciones"><svg width="26" height="20"><path d="M6 8h3v3H6zM11 8h3v3h-3zM16 8h3v3h-3z" fill="#333"/><path d="M15 13h5l-2 3z" fill="#111"/></svg></button>
      </nav>

      <main class="panes">
        <section class="pane">
          <svg class="plot" viewBox="28 23 1890 666">
            <rect x="28" y="23" width="1890" height="666" fill="#fff" />
            <g class="grid">
              <path v-for="d in dates" :key="'v' + d[0]" :d="`M${d[0]}.5 23V689`" />
              <path v-for="p in priceTicks" :key="'h' + p.y" :d="`M28 ${p.y}.5H1872`" />
            </g>
            <path v-for="b in bands" :key="b.c" :d="b.d" :fill="b.c" :stroke="b.s" />
            <ellipse cx="160" cy="599" rx="727" ry="74" fill="rgba(50,150,50,.2)" stroke="rgba(50,150,50,.25)" />
            <rect x="28" y="592" width="451" height="70" fill="rgba(51,51,204,.16)" />
            <rect x="28" y="663" width="451" height="26" fill="rgba(51,255,51,.12)" />
            <rect x="1191" y="375" width="681" height="69" fill="rgba(51,51,204,.16)" />
            <rect x="1191" y="445" width="681" height="86" fill="rgba(51,255,51,.12)" />
            <rect x="530" y="307" width="159" height="67" fill="rgba(50,180,50,.16)" />
            <rect x="535.500" y="247.500" width="331" height="54" fill="rgba(80,110,255,.14)" stroke="#6496ff" />
            <path v-for="(f, i) in fastFill" :key="'ff' + i" :d="f.d" :fill="f.c" />
            <g class="crisp">
              <path v-for="l in under" :key="l.y + '-' + l.a" :d="`M${l.a} ${l.y}.5H${l.z}`" :stroke="l.c" :stroke-width="l.w" :stroke-dasharray="l.dash" />
            </g>
            <text x="38" y="59" class="huge">D</text>
            <text x="38" y="87" class="huge">EUR/USD</text>
            <path v-for="(f, i) in longRuns" :key="'lr' + i" :d="f.d" :stroke="f.c" class="long" />
            <path :d="line(slow)" class="slow" />
            <path v-for="(f, i) in fastRuns" :key="'fr' + i" :d="f.d" :stroke="f.c" class="fast" />
            <g class="crisp">
              <g v-for="k in candles" :key="k.x">
                <path :d="`M${k.x}.5 ${k.high}V${k.low}`" stroke="#000" />
                <rect :x="k.x - 2" :y="k.top" width="5" :height="k.h + 1" fill="#000" />
                <rect v-if="k.h > 1" :x="k.x - 1" :y="k.top + 1" width="3" :height="k.h - 1" :fill="k.c" />
              </g>
            </g>
            <path v-for="s in strokes" :key="s.p" :d="s.d" :stroke="s.c" :stroke-width="s.w" :stroke-dasharray="s.dash || undefined" fill="none" />
            <path d="M1834 342l8 11h-14z" fill="#000" />
            <g class="crisp">
              <rect v-for="l in over" :key="l.y" :x="l.a" :y="l.y - Math.floor(l.w / 2)" :width="l.z - l.a" :height="l.w" :fill="l.c" />
            </g>
            <g v-for="t in levelTags" :key="t.t + t.y">
              <rect :x="t.x + 0.5" :y="t.y + 0.5" :width="t.w" :height="t.h" fill="#fff" :stroke="t.c" />
              <text :x="t.x + 3" :y="t.y + 12" :fill="t.c" class="num">{{ t.t }}</text>
            </g>
            <text v-for="n in notes" :key="n.t + n.x" :x="n.x" :y="n.y" :fill="n.c" class="num">{{ n.t }}</text>
            <g v-for="w in waves" :key="w.t">
              <rect :x="w.x + 0.5" :y="w.y + 0.5" :width="w.w" height="20" rx="3" fill="#fff" :fill-opacity="w.o" stroke="#5a8cf0" />
              <text :x="w.x + w.w / 2" :y="w.y + 14" class="wave">{{ w.t }}</text>
            </g>
            <rect x="113.500" y="673.500" width="14" height="18" fill="#fff" fill-opacity=".6" stroke="#5a8cf0" />
            <text x="116" y="684" fill="#6496ff" font-size="11">C</text>
            <text x="31" y="687" font-size="9" fill="#111">IT-Finance.com - Tiempo Real</text>
            <path d="M1872.500 23V689M28 688.500H1918" class="edge" />
            <g v-for="p in priceTicks" :key="p.y">
              <path :d="`M1872 ${p.y}.5h4`" class="edge" />
              <text x="1879" :y="p.y + 3" class="num">{{ p.t }}</text>
            </g>
            <g v-for="t in priceTags" :key="t.t">
              <path :d="`M1872 ${t.y + 7}.5h4`" :stroke="t.c" />
              <rect :x="t.x + 0.5" :y="t.y + 0.5" :width="t.w - 1" :height="t.h" class="tag" />
              <text :x="t.x + 2" :y="t.y + 11" :fill="t.c" class="num">{{ t.t }}</text>
            </g>
          </svg>
          <div class="legend">
            <span class="arrows"><svg width="28" height="13"><path d="M1 1h10v11H1zM15 1h10v11H15z" fill="#fff" stroke="#9ab"/><path d="M5 3h2v3h2l-3 4-3-4h2z" fill="#f03232"/><path d="M19 10h2V7h2l-3-4-3 4h2z" fill="#1eaa1e"/></svg></span>
            <template v-for="(l, i) in legends" :key="l.t">
              <button><i :class="l.k"></i>{{ l.t }}</button>
              <button v-if="i === 0" class="list" aria-label="Lista"><svg width="10" height="10"><path d="M0 2h2M3 2h6M0 5h2M3 5h6M0 8h2M3 8h6" stroke="#222"/></svg></button>
            </template>
          </div>
        </section>

        <section v-for="p in panes" :key="p.id" class="pane">
          <svg class="plot" :viewBox="p.box">
            <rect x="28" :y="p.top" width="1890" :height="p.h" fill="#fff" />
            <g class="grid">
              <path v-for="d in dates" :key="'v' + d[0]" :d="`M${d[0]}.5 ${p.top}v${p.h}`" />
              <path v-for="y in gridY[p.id]" :key="'h' + y" :d="`M28 ${y}.5H1872`" />
            </g>

            <template v-if="p.id === 'train'">
              <clipPath id="hot"><rect x="28" y="690" width="1317" height="25" /></clipPath>
              <clipPath id="cold"><rect x="28" y="767" width="1317" height="20" /></clipPath>
              <rect x="28" y="698" width="1317" height="17" fill="#d8f5d8" />
              <rect x="28" y="767" width="1317" height="17" fill="#fddcdc" />
              <path :d="area(train, 715)" fill="#4caf50" opacity=".65" clip-path="url(#hot)" />
              <path :d="area(train, 767)" fill="#8c3c28" opacity=".5" clip-path="url(#cold)" />
              <g class="crisp">
                <path d="M28 698.500H1345M28 715.500H1345M28 766.500H1345M28 784.500H1345" stroke="#000" />
                <path d="M28 741.500H1345" stroke="#0000a0" stroke-width="2" stroke-dasharray="4 4" />
              </g>
              <path v-for="(f, i) in trainFill" :key="'tf' + i" :d="f.d" :fill="f.c" />
              <path v-for="(f, i) in oscFill" :key="'of' + i" :d="f.d" :fill="f.c" />
              <path :d="line(oscLag)" fill="none" stroke="#222" stroke-dasharray="4 3" />
              <path v-for="(f, i) in oscRuns" :key="'or' + i" :d="f.d" :stroke="f.c" fill="none" stroke-width="1.500" />
              <path :d="line(trainLag)" fill="none" stroke="#222" stroke-width="3" stroke-dasharray="5 5" />
              <path v-for="(f, i) in trainRuns" :key="'tr' + i" :d="f.d" :stroke="f.c" class="thick" />
              <path v-for="(t, i) in oscDown" :key="'od' + i" :d="down(t)" fill="#b40000" />
              <path v-for="(t, i) in oscUp" :key="'ou' + i" :d="up(t)" fill="#0000b4" />
            </template>

            <template v-else-if="p.id === 'willy'">
              <g v-for="g in willyBars" :key="g.c" :fill="g.c">
                <rect v-for="s in g.s" :key="s[0]" :x="s[0]" y="789" :width="s[1] - s[0]" height="73" />
              </g>
              <clipPath id="above"><rect x="28" y="788" width="1317" height="23" /></clipPath>
              <clipPath id="below"><rect x="28" y="844" width="1317" height="18" /></clipPath>
              <path :d="area(willy, 811)" fill="#3c8c3c" opacity=".5" clip-path="url(#above)" />
              <path :d="area(willy, 844)" fill="#8c1414" opacity=".5" clip-path="url(#below)" />
              <g class="crisp">
                <path d="M28 794.500H1345M28 859.500H1345" stroke="#000" stroke-dasharray="4 4" />
                <path d="M28 811H1345" stroke="#0000a0" stroke-width="2" />
                <path d="M28 827.500H1345" stroke="#0000a0" stroke-width="2" stroke-dasharray="4 4" />
                <path d="M28 843H1345" stroke="#d20000" stroke-width="2" />
              </g>
              <path v-for="(f, i) in willyRuns" :key="i" :d="f.d" :stroke="f.c" class="thick" />
              <path v-for="(t, i) in willyDown" :key="'wd' + i" :d="down(t, 6)" fill="#b40000" />
              <path v-for="(t, i) in willyUp" :key="'wu' + i" :d="up(t, 6)" fill="#0000b4" />
            </template>

            <template v-else-if="p.id === 'ao'">
              <g class="crisp">
                <template v-for="b in aoBars" :key="b.x">
                  <rect v-if="b.sh" :x="b.x" :y="b.s" width="3" :height="b.sh" fill="#fbd0d0" />
                  <rect :x="b.x" :y="b.y" width="3" :height="b.h" :fill="b.c" />
                </template>
              </g>
              <path d="M28 899.500H1345" stroke="#1414e6" stroke-width="2" />
              <path v-for="(f, i) in aoFastRuns" :key="'af' + i" :d="f.d" :stroke="f.c" class="thick" />
              <path v-for="(f, i) in aoSlowRuns" :key="'as' + i" :d="f.d" :stroke="f.c" class="thick" />
              <path v-for="(t, i) in aoUp" :key="'au' + i" :d="up(t)" fill="#00f0f0" />
              <path v-for="(t, i) in aoDown" :key="'ad' + i" :d="down(t)" fill="#fff000" />
            </template>

            <template v-else>
              <g class="crisp">
                <g v-for="g in forceBands" :key="g.c" :fill="g.c">
                  <rect v-for="s in g.s" :key="s[0]" :x="s[0]" y="919" :width="s[1] - s[0]" height="76" />
                </g>
                <g v-for="b in forceBars" :key="b.x">
                  <rect :x="b.x" :y="b.y" width="6" :height="b.h" :fill="b.up ? '#1428be' : '#d22828'" opacity=".6" />
                  <rect :x="b.x + 1" :y="b.y + 1" width="3" :height="b.h" :fill="b.up ? '#1414dc' : '#c81e28'" opacity=".45" />
                </g>
                <path d="M28 981.500H1345" stroke="#000" />
              </g>
            </template>

            <path :d="`M1872.500 ${p.top}v${p.h}M28 ${p.top + p.h - 1}.5H1918`" class="edge" />
            <path v-for="y in ticksY[p.id]" :key="'t' + y" :d="`M1872 ${y}.5h4`" class="edge" />
            <text v-for="t in plain[p.id]" :key="t.t" x="1879" :y="t.y + 3" class="num">{{ t.t }}</text>
            <g v-for="t in tagsOf[p.id]" :key="t.y">
              <rect :x="t.x + 0.5" :y="t.y + 0.5" :width="t.w" :height="t.h" class="tag" />
              <text :x="t.x + 2" :y="t.y + 10" :fill="t.c" class="num">{{ t.t }}</text>
            </g>
          </svg>
          <div class="legend sub"><button><i :class="p.key"></i>{{ p.title }}</button></div>
        </section>

        <svg class="plot" viewBox="28 995 1890 15">
          <rect x="28" y="995" width="1890" height="15" fill="#fff" />
          <path v-for="m in minor" :key="m" :d="`M${m}.5 995v3`" class="edge" />
          <g v-for="d in dates" :key="d[0]">
            <path :d="`M${d[0]}.5 995v3`" class="edge" />
            <text :x="d[0]" y="1008" text-anchor="middle" class="num" :class="{ month: d[1].length > 2 }">{{ d[1] }}</text>
          </g>
        </svg>
      </main>
    </div>

    <footer class="bottom">
      <button class="draw" aria-label="Dibujo"><svg width="20" height="18"><path d="M2 3l6 12L13 3M2 16L16 9" stroke="#333" fill="none"/><path d="M9 13l7-9 2 2-7 9-3 1z" fill="#ffdc32" stroke="#806000"/><path d="M3 5l3 10" stroke="#d22"/></svg></button>
      <button v-for="i in leftIcons" :key="i[0]" class="tool" :aria-label="i[0]"><svg width="20" height="20" viewBox="0 0 20 20" v-html="i[1]"></svg></button>
      <button class="chev" aria-label="Contraer">«</button>
      <div class="scroll">
        <button aria-label="Izquierda">‹</button>
        <span class="track"><span class="thumb"></span></span>
        <button aria-label="Derecha">›</button>
      </div>
      <button v-for="i in rightIcons" :key="i[0]" class="tool right" :aria-label="i[0]"><svg width="20" height="20" viewBox="0 0 20 20" v-html="i[1]"></svg></button>
    </footer>
  </div>
</template>

<style>
body { margin: 0; background: #9bb8c5; }
</style>

<style scoped>
.app { font-family: "Liberation Sans", Arial, sans-serif; font-size: 9px; color: #111; background: #9bb8c5; display: flex; flex-direction: column; }
button { font: inherit; color: inherit; background: none; border: 0; padding: 0; margin: 0; display: flex; align-items: center; justify-content: center; }
svg { display: block; flex: none; }

.topbar { height: 23px; box-sizing: border-box; display: flex; align-items: stretch; background: linear-gradient(#bcd6e3, #9ab6c4); border-top: 1px solid #3f5a68; border-bottom: 2px solid #4c6674; font-weight: bold; }
.cell { border-right: 1px solid #6f8794; box-sizing: border-box; display: flex; align-items: center; }
.sq { width: 24px; }
.grip { width: 16px; }
.pick { justify-content: space-between; padding: 0 5px 0 3px; }
.pick select { appearance: none; border: 0; padding: 0; margin: 0; background: none; font: bold 9px "Liberation Sans", Arial, sans-serif; color: #111; flex: 1; min-width: 0; }
.symbol { width: 61px; }
.period { width: 43px; padding: 0 5px; }
.units { width: 84px; padding: 0 3px 0 5px; }
.group { gap: 3px; padding: 0 3px; }
.frames { width: 193px; justify-content: space-between; }
.sizes { width: 92px; justify-content: space-between; }
.group button { height: 17px; padding: 0 2px; border: 1px solid #7b919d; border-radius: 2px; background: #a9c5d2; }
.group button.on { background: #8ba3af; }
.ind { width: 85px; gap: 4px; }
.ind span { font-size: 10px; }
.drop { width: 15px; justify-content: center; }
.info { align-self: center; margin-left: 8px; width: 9px; height: 9px; line-height: 9px; text-align: center; background: #e4edf1; color: #78909c; }
.dot { align-self: center; width: 6px; height: 6px; border-radius: 3px; background: #8a8a8a; margin: 0 6px 0 10px; }
.chg { align-self: center; height: 14px; line-height: 12px; width: 39px; text-align: center; border-radius: 2px; background: #50e650; color: #fff; font-weight: normal; border: 1px solid #32b432; box-sizing: border-box; }
.day { align-self: center; width: 50px; margin: 0 4px; }
.pair { align-self: center; height: 14px; line-height: 12px; padding: 0 1px; border: 1px solid #3c96c8; border-radius: 3px; background: #5ab9eb; color: #111; text-decoration: none; font-weight: normal; font-size: 10px; box-sizing: border-box; }
.fill { flex: 1; }
.sync { width: 21px; border-left: 1px solid #6f8794; }
.win { width: 14px; margin-right: 1px; }

.body { display: flex; }
.side { width: 28px; flex: none; box-sizing: border-box; border-left: 1px solid #4c6674; border-right: 1px solid #6f8794; display: flex; flex-direction: column; background: #9bb8c5; }
.fold { height: 10px; border-bottom: 1px solid #7b919d; }
.tools { flex: 1 1 0; min-height: 0; overflow: hidden; padding-top: 2px; }
.tools button { width: 22px; height: 22px; margin-left: 2px; border: 1px solid transparent; border-radius: 3px; box-sizing: border-box; }
.tools button.on { background: #8ca4b0; border-color: #778e9a; }
.more { height: 12px; background: #b4d0de; border-top: 1px solid #7b919d; }
.big { height: 28px; }

.panes { flex: 1; min-width: 0; }
.pane { position: relative; }
.plot { width: 100%; height: auto; }
.legend { position: absolute; left: 0; top: 0; display: flex; height: 15px; box-sizing: border-box; background: #cfdde4; border-bottom: 1px solid #6f8794; font-weight: bold; }
.legend button, .arrows { border-right: 1px solid #6f8794; gap: 5px; padding: 0 3px 0 6px; white-space: nowrap; display: flex; align-items: center; }
.legend .arrows { padding: 0 0 0 2px; }
.legend .list { padding: 0 2px 0 3px; }
.legend i { width: 8px; height: 8px; box-sizing: border-box; }
.legend i.empty { border: 1px solid #8296a0; }
.legend i.slate { background: #78909c; }
.legend i.black { background: #000; }
.legend i.multi { background: linear-gradient(90deg, #000 2px, #22f 2px 4px, #c3c 4px 5px, #000 5px 6px, #0aa 6px 7px, #a30 7px); }
.legend i.half { background: linear-gradient(90deg, #78909c 4px, #000 4px); }
.legend i.half.dark { background: linear-gradient(90deg, #000 4px, #78909c 4px); }
.legend.sub { height: 17px; border-top: 1px solid #6f8794; }
.legend.sub button { padding: 0 6px 0 3px; }

.crisp, .grid, .edge { shape-rendering: crispEdges; }
.grid path { stroke: #e2e2e2; stroke-dasharray: 1 3; }
.edge { stroke: #6f8794; fill: none; }
.huge { font-size: 23px; font-weight: bold; }
.long { fill: none; stroke-width: 5; stroke-dasharray: 7 6; }
.slow { fill: none; stroke: #a00000; stroke-width: 2; stroke-dasharray: 5 4; }
.fast { fill: none; stroke-width: 4; stroke-linecap: round; stroke-linejoin: round; }
.thick { fill: none; stroke-width: 4; stroke-linecap: round; stroke-linejoin: round; }
.num { font-size: 9px; font-weight: bold; }
.month { font-size: 10px; }
.wave { font-size: 10px; text-anchor: middle; fill: #222; }
.tag { fill: #f0f4f6; stroke: #6f8794; }

.bottom { height: 20px; display: flex; align-items: center; background: #9bb8c5; border-top: 1px solid #5f7886; box-sizing: border-box; }
.draw { width: 28px; height: 19px; background: #8ca4b0; box-sizing: border-box; border-right: 1px solid #6f8794; }
.tool { width: 21px; height: 19px; flex: none; }
.chev { width: 14px; font-size: 13px; color: #334; }
.scroll { flex: 1; display: flex; align-items: stretch; height: 13px; border: 1px solid #6f8794; margin: 0 3px 0 0; box-sizing: border-box; }
.scroll button { width: 12px; background: #b4d0de; font-size: 12px; font-weight: bold; line-height: 10px; }
.track { flex: 1; display: flex; justify-content: flex-end; padding-right: 14px; border-left: 1px solid #6f8794; border-right: 1px solid #6f8794; }
.thumb { width: 51px; background: #b4d0de; border-left: 1px solid #6f8794; border-right: 1px solid #6f8794; }
</style>
